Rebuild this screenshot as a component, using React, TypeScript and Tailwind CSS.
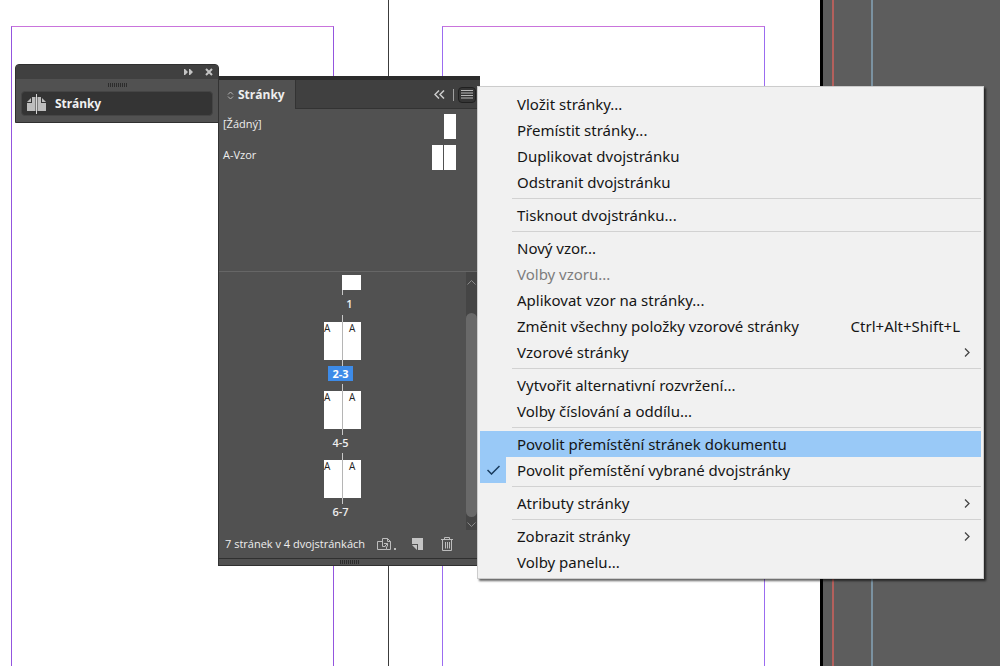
import type { ReactNode } from "react";

type MenuEntry = {
  label: string;
  shortcut?: string;
  submenu?: boolean;
  disabled?: boolean;
  highlighted?: boolean;
  checked?: boolean;
};

const menuGroups: MenuEntry[][] = [
  [
    { label: "Vložit stránky..." },
    { label: "Přemístit stránky..." },
    { label: "Duplikovat dvojstránku" },
    { label: "Odstranit dvojstránku" },
  ],
  [{ label: "Tisknout dvojstránku..." }],
  [
    { label: "Nový vzor..." },
    { label: "Volby vzoru...", disabled: true },
    { label: "Aplikovat vzor na stránky..." },
    { label: "Změnit všechny položky vzorové stránky", shortcut: "Ctrl+Alt+Shift+L" },
    { label: "Vzorové stránky", submenu: true },
  ],
  [{ label: "Vytvořit alternativní rozvržení..." }, { label: "Volby číslování a oddílu..." }],
  [
    { label: "Povolit přemístění stránek dokumentu", highlighted: true },
    { label: "Povolit přemístění vybrané dvojstránky", checked: true },
  ],
  [{ label: "Atributy stránky", submenu: true }],
  [{ label: "Zobrazit stránky", submenu: true }, { label: "Volby panelu..." }],
];

function Grip() {
  return (
    <span className="flex gap-px" aria-hidden="true">
      {Array.from({ length: 10 }, (_, i) => (
        <span key={i} className="h-1 w-px bg-[#2c2c2c]" />
      ))}
    </span>
  );
}

function DocumentArea() {
  return (
    <main className="grid min-h-screen grid-cols-[389fr_434fr_177fr] bg-[#5d5d5d]">
      <section className="flex border-r border-[#3c3c3c] bg-white pt-[26px] pr-[54px] pl-[11px]">
        <div className="flex-1 border-x border-t border-x-[#9355de] border-t-[#c974dc]" />
      </section>
      <section className="flex border-r-[3px] border-black bg-white pt-[26px] pr-[55px] pl-[53px]">
        <div className="flex-1 border-x border-t border-x-[#9b6cf0] border-t-[#c974dc]" />
      </section>
      <aside className="flex pl-[9px]">
        <div className="w-[39px] border-l-2 border-[#b3605c]" />
        <div className="w-[2px] bg-[#7b92a1]" />
      </aside>
    </main>
  );
}

function CollapsedPanel() {
  return (
    <section className="absolute top-16 left-[15px] w-[204px] rounded-t border border-[#303030] bg-[#515151]">
      <header className="flex h-[14px] items-center justify-end gap-3 rounded-t bg-[#404040] pr-[5px]">
        <button type="button" aria-label="Rozbalit" className="flex">
          <svg className="h-[6px] w-[9px] fill-[#c4c4c4]" viewBox="0 0 9 6">
            <path d="M0 0h1l3 3-3 3H0zM5 0h1l3 3-3 3H5z" />
          </svg>
        </button>
        <button type="button" aria-label="Zavřít" className="flex">
          <svg className="h-2 w-2 stroke-[#c4c4c4]" viewBox="0 0 8 8" strokeWidth="2">
            <path d="M1 1l6 6M7 1L1 7" />
          </svg>
        </button>
      </header>
      <div className="flex h-3 items-center justify-center">
        <Grip />
      </div>
      <div className="px-[5px] pb-[6px]">
        <button
          type="button"
          className="flex h-[25px] w-full items-center gap-[9px] rounded-sm border border-[#454545] bg-[#343434] pt-px pl-[5px] text-xs font-bold text-[#f0f0f0]"
        >
          <svg className="h-[20px] w-[19px] shrink-0" viewBox="0 0 19 20">
            <path d="M0 8l4-4v4zM5 3h3.500v14H0V9h5zM10.500 3H14v6h5v8h-8.500zM15 4l4 4h-4z" fill="#bdbdbd" />
            <path d="M9.500 0v20" stroke="#d8d8d8" />
          </svg>
          Stránky
        </button>
      </div>
    </section>
  );
}

function Spread({ label, selected }: { label: string; selected?: boolean }) {
  return (
    <li className="flex h-[69px] flex-col items-center">
      <button type="button" className="flex flex-col items-center" aria-label={"Dvojstránka " + label}>
        <span className="h-[7px] w-px bg-[#c8c8c8]" />
        <span className="flex h-[38px] w-[37px] bg-white text-[10px] leading-3 text-[#222222]">
          <span className="w-[18px] text-left">A</span>
          <span className="w-px bg-[#b5b5b5]" />
          <span className="w-[18px] pl-[6px] text-left">A</span>
        </span>
        <span className="h-[6px] w-px bg-[#c8c8c8]" />
      </button>
      <span
        className={
          selected
            ? "mr-1 h-[15px] bg-[#3d8be8] px-1 text-[11px] leading-[15px] font-bold text-white"
            : "mr-1 h-[15px] px-1 text-[11px] leading-[15px] font-semibold text-[#eeeeee]"
        }
      >
        {label}
      </span>
    </li>
  );
}

function ToolButton({ label, children }: { label: string; children: ReactNode }) {
  return (
    <button type="button" aria-label={label} className="flex shrink-0">
      {children}
    </button>
  );
}

function PagesPanel() {
  return (
    <section className="absolute top-[76px] left-[218px] w-[262px] border-l border-[#333333] bg-[#515151] font-['Open_Sans','Noto_Sans',sans-serif] text-[11px] text-[#eeeeee]">
      <header className="flex h-[33px] border-t-4 border-[#2b2b2b] bg-[#404040]">
        <h2 className="flex w-[76px] items-center gap-1 bg-[#515151] pt-px pl-2 text-xs font-bold">
          <svg className="h-[9px] w-[7px] fill-none stroke-[#b5b5b5]" viewBox="0 0 7 9">
            <path d="M1 3.500L3.500 1 6 3.500M1 5.500L3.500 8 6 5.500" />
          </svg>
          Stránky
        </h2>
        <div className="flex flex-1 items-center justify-end gap-2 border-b border-l border-[#333333] pt-px pr-1">
          <button type="button" aria-label="Sbalit panel" className="flex">
            <svg className="h-[9px] w-[11px] fill-none stroke-[#cccccc]" viewBox="0 0 11 9" strokeWidth="1.500">
              <path d="M5 .5l-4 4 4 4M10 .5l-4 4 4 4" />
            </svg>
          </button>
          <span className="h-3 w-px bg-[#a0a0a0]" />
          <button
            type="button"
            aria-label="Nabídka panelu"
            className="-ml-1 flex h-4 w-[18px] items-center justify-center rounded-sm border border-[#202020] bg-[#353535]"
          >
            <svg className="h-[9px] w-3 stroke-[#b8b8b8]" viewBox="0 0 12 9">
              <path d="M0 .5h12M0 3h12M0 5.500h12M0 8h12" />
            </svg>
          </button>
        </div>
      </header>

      <ul className="flex h-[163px] flex-col border-b border-[#666666] pt-[5px] pr-6 pl-1">
        <li className="flex h-[31px] items-start justify-between">
          <span className="leading-5">[Žádný]</span>
          <span className="h-[25px] w-3 bg-white" />
        </li>
        <li className="flex h-[31px] items-start justify-between">
          <span className="leading-5">A-Vzor</span>
          <span className="flex gap-px">
            <span className="h-[25px] w-[11px] bg-white" />
            <span className="h-[25px] w-3 bg-white" />
          </span>
        </li>
      </ul>

      <div className="flex h-[258px]">
        <ol className="flex-1 pt-[3px]">
          <li className="flex h-10 flex-col items-center">
            <span className="ml-[18px] h-[15px] w-[19px] bg-white" />
            <span className="h-[5px] w-px bg-[#c8c8c8]" />
            <span className="ml-[14px] leading-[18px] font-semibold">1</span>
          </li>
          <Spread label="2-3" selected />
          <Spread label="4-5" />
          <Spread label="6-7" />
        </ol>
        <div className="mr-[3px] flex w-[11px] flex-col items-center bg-[#454545]" aria-hidden="true">
          <svg className="mt-2 h-[5px] w-[9px] shrink-0 fill-none stroke-[#8a8a8a]" viewBox="0 0 9 5">
            <path d="M.5 4.500l4-4 4 4" />
          </svg>
          <span className="mt-7 h-[204px] w-full rounded-full bg-[#696969]" />
          <svg className="mt-[5px] h-[5px] w-[9px] shrink-0 fill-none stroke-[#8a8a8a]" viewBox="0 0 9 5">
            <path d="M.5 .5l4 4 4-4" />
          </svg>
        </div>
      </div>

      <footer>
        <div className="flex h-7 items-center pr-[27px] pl-[6px]">
          <span className="flex-1 whitespace-nowrap">7 stránek v 4 dvojstránkách</span>
          <div className="flex items-center">
            <ToolButton label="Upravit velikost stránky">
              <svg className="h-[14px] w-5 fill-none stroke-[#bdbdbd]" viewBox="0 0 20 14">
                <path d="M5.500 4.500h-5v8h9v-3M5.500 9.500v-8h5l3 3v8h-4M10.500 1.500v3h3M5.500 9.500h3M7 6.500h3.500v3M10.500 6.500L7 10" />
                <path d="M17 11h2v2h-2z" fill="#bdbdbd" stroke="none" />
              </svg>
            </ToolButton>
            <span className="w-[15px]" />
            <ToolButton label="Nová stránka">
              <svg className="h-3 w-[11px] fill-[#c4c4c4]" viewBox="0 0 11 12">
                <path d="M0 0h11v12H6V6H0zM0 7h5v5z" />
              </svg>
            </ToolButton>
            <span className="w-[18px]" />
            <ToolButton label="Odstranit stránku">
              <svg className="h-[14px] w-3 fill-none stroke-[#bdbdbd]" viewBox="0 0 12 14">
                <path d="M0 2.500h12M3.500 2V.5h5V2M1.500 3v10.500h9V3M4.500 5v6.500M6.500 5v6.500M8.500 5v6.500" />
              </svg>
            </ToolButton>
          </div>
        </div>
        <div className="flex h-2 items-center justify-center border-y border-[#303030]">
          <Grip />
        </div>
      </footer>
    </section>
  );
}

function MenuRow({ entry }: { entry: MenuEntry }) {
  return (
    <button
      type="button"
      role={entry.checked ? "menuitemcheckbox" : "menuitem"}
      aria-checked={entry.checked}
      disabled={entry.disabled}
      className={
        entry.highlighted
          ? "flex h-[26px] w-full items-center bg-[#99c9f7] text-left"
          : entry.disabled
            ? "flex h-[26px] w-full items-center text-left text-[#7d7d7d]"
            : "flex h-[26px] w-full items-center text-left"
      }
    >
      <span
        className={
          entry.checked
            ? "mr-[11px] flex h-full w-[26px] items-center justify-center bg-[#99c9f7]"
            : "mr-[11px] h-full w-[26px]"
        }
      >
        {entry.checked && (
          <svg className="h-[10px] w-[13px] fill-none stroke-[#173a5c]" viewBox="0 0 13 10" strokeWidth="1.500">
            <path d="M.5 5l4 4L12.500 1" />
          </svg>
        )}
      </span>
      <span className="flex-1 whitespace-nowrap">{entry.label}</span>
      {entry.shortcut && <span className="mr-[21px]">{entry.shortcut}</span>}
      {entry.submenu && (
        <svg className="mr-[11px] h-[9px] w-[6px] fill-none stroke-[#444444]" viewBox="0 0 6 9" strokeWidth="1.300">
          <path d="M1 .5l4 4-4 4" />
        </svg>
      )}
    </button>
  );
}

function PanelMenu() {
  return (
    <div
      role="menu"
      className="absolute top-[86px] left-[477px] w-[507px] border border-[#cccccc] bg-[#f1f1f1] px-[2px] pt-1 pb-[3px] text-[15px] text-[#151515] shadow-[2px_2px_2px_rgba(0,0,0,0.6)]"
    >
      {menuGroups.map((group, index) => (
        <div key={group[0].label} role="group">
          {index > 0 && <div role="separator" className="mt-[3px] mb-[3px] ml-8 h-px bg-[#d2d2d2]" />}
          {group.map((entry) => (
            <MenuRow key={entry.label} entry={entry} />
          ))}
        </div>
      ))}
    </div>
  );
}

export default function App() {
  return (
    <div className="relative min-h-screen overflow-hidden font-['Noto_Sans',sans-serif]">
      <DocumentArea />
      <CollapsedPanel />
      <PagesPanel />
      <PanelMenu />
    </div>
  );
}
